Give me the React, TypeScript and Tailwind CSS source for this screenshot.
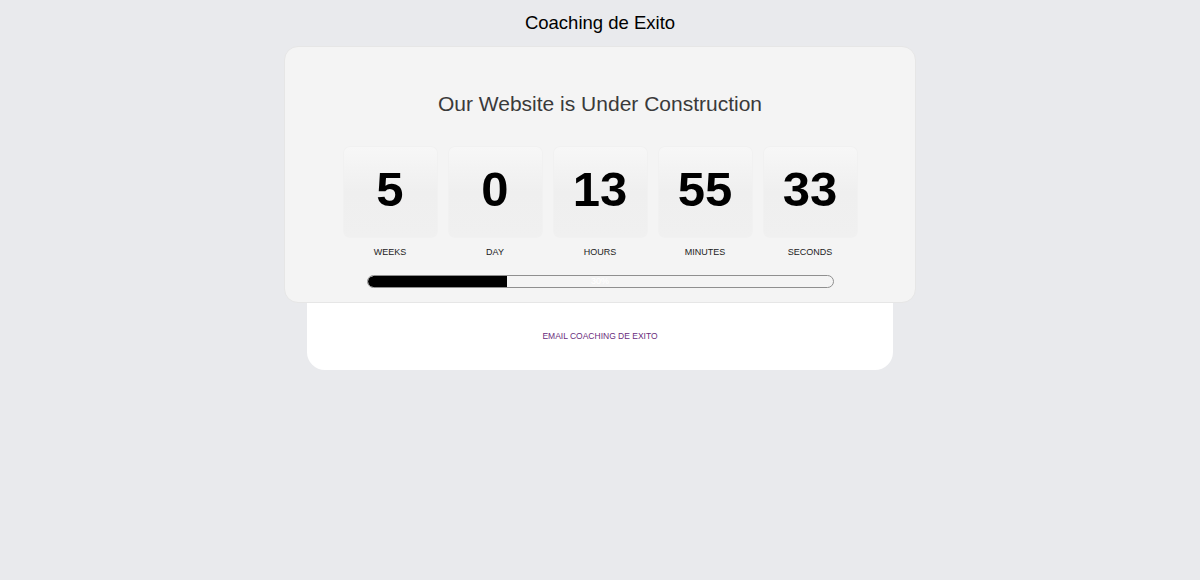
import React from 'react';

const units = [
  { value: '5', label: 'WEEKS' },
  { value: '0', label: 'DAY' },
  { value: '13', label: 'HOURS' },
  { value: '55', label: 'MINUTES' },
  { value: '33', label: 'SECONDS' },
];

const progress = 30;

const App: React.FC = () => {
  return (
    <div className="min-h-screen w-full bg-[#e9eaed] flex flex-col items-center font-['Liberation_Sans',Arial,sans-serif]">
      <h1 className="mt-[12px] text-[18.5px] leading-[22px] text-black">Coaching de Exito</h1>

      <div className="mt-[12px] flex flex-col items-center">
        {/* Countdown card */}
        <div className="relative z-10 w-[632px] h-[257px] bg-[#f4f4f4] border border-[#e6e6e6] rounded-[14px] flex flex-col items-center">
          <h2 className="mt-[44px] text-[21px] leading-[26px] text-[#3a3a3a]">Our Website is Under Construction</h2>

          <div className="mt-[30px] flex gap-[12px]">
            {units.map((u) => (
              <div key={u.label} className="flex flex-col items-center w-[93px]">
                <div className="w-[93px] h-[90px] pb-[6px] rounded-[6px] bg-gradient-to-b from-[#f7f7f7] via-[#efefef] to-[#f0f0f0] shadow-[0_0_2px_rgba(0,0,0,0.06)] flex items-center justify-center">
                  <span className="text-[49px] leading-none font-bold text-black">{u.value}</span>
                </div>
                <span className="mt-[9px] text-[9px] leading-[12px] text-[#222]">{u.label}</span>
              </div>
            ))}
          </div>

          {/* Progress bar */}
          <div className="mt-[17px] relative w-[467px] h-[13px] rounded-full border border-[#8f8f8f] bg-[#f4f4f4] overflow-hidden">
            <div className="h-full bg-black rounded-l-full" style={{ width: `${progress}%` }} />
            <span className="absolute inset-0 flex items-center justify-center text-[9px] text-white">{progress}%</span>
          </div>
        </div>

        {/* Contact footer */}
        <div className="w-[586px] h-[68px] -mt-px bg-white rounded-b-[18px] flex items-center justify-center">
          <a href="#" className="text-[8.5px] text-[#6a2c7c]">EMAIL COACHING DE EXITO</a>
        </div>
      </div>
    </div>
  );
};

export default App;
